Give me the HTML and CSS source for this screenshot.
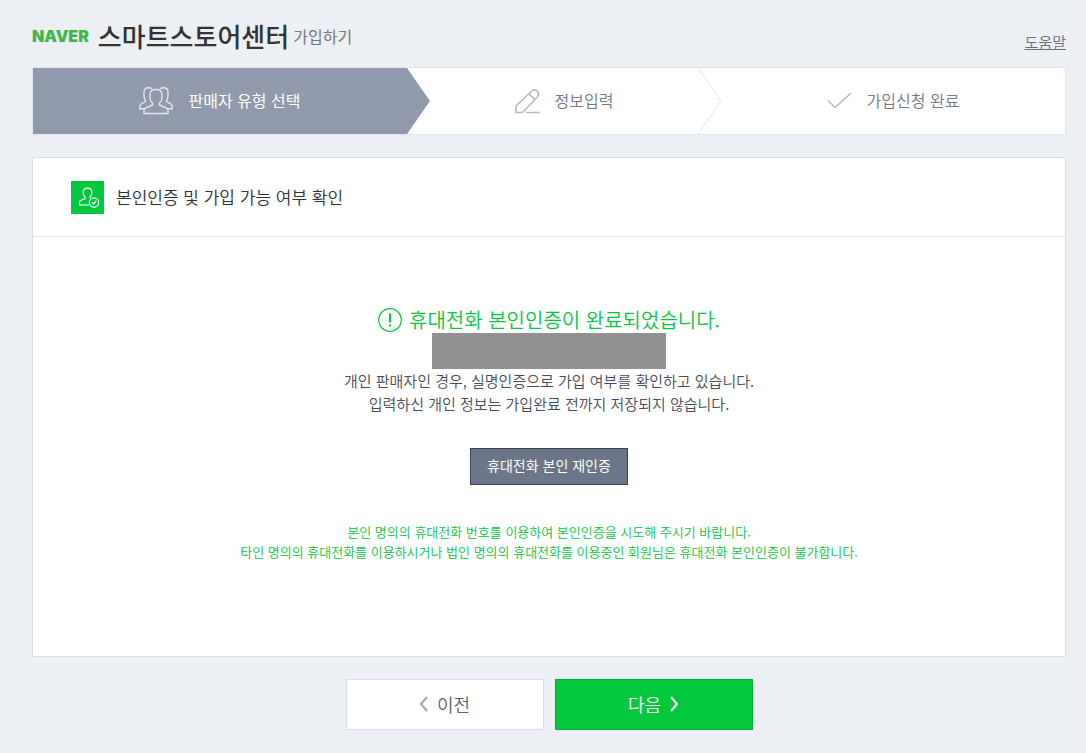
FILE: index.html
```html
<!DOCTYPE html>
<html lang="ko">
<head>
    <meta charset="UTF-8">
    <meta name="viewport" content="width=device-width, initial-scale=1.0">
    <title>스마트스토어센터 가입하기</title>
    <link rel="stylesheet" href="styles.css">
</head>
<body>
    <header class="header">
        <h1 class="logo">
            <span class="logo-naver">NAVER</span>
            <span class="logo-service">스마트스토어센터</span>
            <span class="logo-page">가입하기</span>
        </h1>
        <a class="help" href="#">도움말</a>
    </header>

    <ol class="steps">
        <li class="step step-type active">
            <svg class="step-icon" width="34" height="28" viewBox="0 0 34 28">
                <path d="M11 7.500C11 4 13 2.500 17 2.500S23 4 23 7.500V11c0 2.500-1 4-2.500 5v2l7 3c1.200.6 1.500 1.300 1.500 2.500v3H5v-3c0-1.200.3-1.900 1.500-2.500l7-3v-2C12 15 11 13.500 11 11z"/>
                <path d="M13 2C12.300 1.200 11.200.8 9.500.8 6.500.8 5 2.500 5 5.500V9c0 2 .5 3.500 1.500 4.500v1L2.200 17c-1 .5-1.400 1.200-1.400 2.200v2.500H5M21 2c.7-.8 1.800-1.200 3.500-1.200 3 0 4.500 1.700 4.500 4.700V9c0 2-.5 3.500-1.500 4.500v1l4.300 2.500c1 .5 1.400 1.200 1.400 2.200v2.500H29"/>
            </svg>
            <span>판매자 유형 선택</span>
            <svg class="arrow" width="24" height="66" viewBox="0 0 24 66">
                <path d="M0 0L23 33L0 66z"/>
            </svg>
        </li>
        <li class="step step-info">
            <svg class="step-icon" width="25" height="25" viewBox="0 0 25 25">
                <path d="M1 23.500V17L16.200 2.500c2-2 4.300-1.900 6-.3s1.700 4 0 6L7.500 23.500zM14 4.800l6 5.800M11 23.500h14"/>
            </svg>
            <span>정보입력</span>
            <svg class="arrow" width="24" height="66" viewBox="0 0 24 66">
                <path d="M0 0L23 33L0 66"/>
            </svg>
        </li>
        <li class="step step-done">
            <svg class="step-icon check" width="25" height="18" viewBox="0 0 25 18">
                <path d="M1 8.500l7 7L24 1"/>
            </svg>
            <span>가입신청 완료</span>
        </li>
    </ol>

    <main class="card">
        <div class="card-head">
            <svg class="card-icon" width="33" height="33" viewBox="0 0 33 33">
                <path d="M18 24H8.500v-2.500c0-1 .4-1.500 1.300-2l4.200-2v-1.700c-1.200-1-1.900-2.200-1.900-4 0-2.800 1.500-4.600 4.400-4.600s4.400 1.800 4.400 4.600c0 1.800-.7 3-1.900 4v1.200"/>
                <circle cx="23" cy="21.500" r="4.700"/>
                <path d="M21 21.500l1.500 1.500 2.700-3"/>
            </svg>
            <h2>본인인증 및 가입 가능 여부 확인</h2>
        </div>
        <div class="card-body">
            <h3 class="result">
                <svg class="result-icon" width="24" height="24" viewBox="0 0 24 24">
                    <circle cx="12" cy="12" r="11.300"/>
                    <path class="mark" d="M12 5.500v9M12 16.500v2"/>
                </svg>
                휴대전화 본인인증이 완료되었습니다.
            </h3>
            <div class="masked"></div>
            <p class="desc">개인 판매자인 경우, 실명인증으로 가입 여부를 확인하고 있습니다.<br>입력하신 개인 정보는 가입완료 전까지 저장되지 않습니다.</p>
            <button type="button" class="btn-retry">휴대전화 본인 재인증</button>
            <p class="notice">본인 명의의 휴대전화 번호를 이용하여 본인인증을 시도해 주시기 바랍니다.<br>타인 명의의 휴대전화를 이용하시거나 법인 명의의 휴대전화를 이용중인 회원님은 휴대전화 본인인증이 불가합니다.</p>
        </div>
    </main>

    <div class="buttons">
        <button type="button" class="btn btn-prev">
            <svg width="9" height="16" viewBox="0 0 9 16"><path d="M8 1L2 8l6 7"/></svg>
            이전
        </button>
        <button type="button" class="btn btn-next">
            다음
            <svg width="9" height="16" viewBox="0 0 9 16"><path d="M1 1l6 7-6 7"/></svg>
        </button>
    </div>
</body>
</html>
```

FILE: styles.css
```css
* {
    box-sizing: border-box;
}

body {
    margin: 0;
    padding: 0 20px 23px 32px;
    background-color: #eceff4;
    color: #303038;
    font-family: "Noto Sans CJK KR", sans-serif;
    font-weight: 350;
}

h1, h2, h3, p, ol {
    margin: 0;
    padding: 0;
    font-weight: 350;
}

svg {
    fill: none;
    flex-shrink: 0;
}

button {
    font-family: inherit;
    cursor: pointer;
}

.header {
    display: flex;
    justify-content: space-between;
    align-items: flex-end;
    height: 67px;
    padding-bottom: 12px;
}

.logo {
    display: flex;
    align-items: center;
    line-height: 38px;
}

.logo-naver {
    margin-right: 9px;
    color: #3fb649;
    font-family: Inter, sans-serif;
    font-size: 16px;
    font-weight: 900;
}

.logo-service {
    margin-right: 4px;
    color: #333;
    font-size: 26px;
    font-weight: 500;
}

.logo-page {
    color: #777;
    font-size: 16px;
    font-weight: 400;
}

.help {
    color: #6b6e7a;
    font-size: 15px;
    line-height: 26px;
}

.steps {
    display: grid;
    grid-template-columns: 374fr 291fr 367fr;
    border: 1px solid #e0e4eb;
    background: #fff;
    list-style: none;
}

.step {
    position: relative;
    display: flex;
    justify-content: center;
    align-items: center;
    gap: 15px;
    height: 66px;
    color: #757884;
    font-size: 16px;
    line-height: 24px;
}

.step span {
    padding-bottom: 2px;
}

.step-info,
.step-done {
    padding-left: 23px;
}

.step-icon {
    stroke: #b5bac8;
    stroke-width: 1.6;
}

.step.active {
    background: #9199ac;
    color: #fff;
    font-weight: 400;
}

.active .step-icon {
    stroke: #e3e6ec;
    stroke-width: 1.4;
}

/* arrow head overlaps the next step */
.arrow {
    position: absolute;
    top: 0;
    left: 100%;
    z-index: 1;
    stroke: #e5e6ea;
}

.active .arrow {
    fill: #9199ac;
    stroke: none;
}

.card {
    margin-top: 22px;
    border: 1px solid #d9dce2;
    background: #fff;
}

.card-head {
    display: flex;
    align-items: center;
    gap: 12px;
    height: 79px;
    padding-left: 38px;
    border-bottom: 1px solid #e0e4eb;
}

.card-head h2 {
    font-size: 17px;
    line-height: 24px;
}

.card-icon {
    background: #03c73c;
    stroke: #fff;
    stroke-width: 1.2;
}

.card-body {
    display: flex;
    flex-direction: column;
    align-items: center;
    padding: 70px 20px 94px;
    text-align: center;
}

.result {
    display: flex;
    align-items: center;
    gap: 7px;
    color: #03c73c;
    font-size: 20px;
    line-height: 26px;
}

.result-icon {
    stroke: #03c73c;
    stroke-width: 1.2;
}

.result-icon .mark {
    stroke-width: 2;
}

.masked {
    width: 234px;
    height: 36px;
    background: #919191;
}

.desc {
    color: #484b55;
    font-size: 15px;
    line-height: 23px;
}

.btn-retry {
    margin: 33px 0 37px;
    padding: 0 16px 3px;
    height: 37px;
    border: 1px solid #3b3f4a;
    background: #6c768a;
    color: #fff;
    font-size: 14px;
    font-weight: 400;
}

.notice {
    color: #03c73c;
    font-size: 13px;
    line-height: 20px;
}

.buttons {
    display: flex;
    justify-content: center;
    gap: 11px;
    margin-top: 22px;
}

.btn {
    display: flex;
    justify-content: center;
    align-items: center;
    gap: 9px;
    width: 198px;
    height: 51px;
    padding-bottom: 2px;
    font-size: 18px;
}

.btn svg {
    stroke-width: 2;
}

.btn-prev {
    border: 1px solid #d9dce2;
    background: #fff;
    color: #606168;
    font-weight: 350;
}

.btn-prev svg {
    stroke: #a0a6b7;
}

.btn-next {
    border: 1px solid #04ae36;
    background: #03c73c;
    color: #fff;
    font-weight: 350;
}

.btn-next svg {
    stroke: #fff;
}
```
